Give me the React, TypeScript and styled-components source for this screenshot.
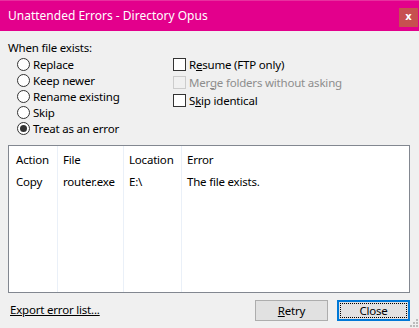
import React from 'react';
import styled, { createGlobalStyle } from 'styled-components';

const GlobalStyle = createGlobalStyle`
  html, body {
    margin: 0;
    padding: 0;
    background: #f0f0f0;
  }
  body {
    font-family: 'Noto Sans', 'Liberation Sans', sans-serif;
    font-size: 11.5px;
    letter-spacing: -0.2px;
    color: #000;
  }
`;

const radioOptions = ['Replace', 'Keep newer', 'Rename existing', 'Skip', 'Treat as an error'];

const checkOptions: { before: string; key: string; after: string; disabled?: boolean }[] = [
  { before: 'R', key: 'e', after: 'sume (FTP only)' },
  { before: 'Mer', key: 'g', after: 'e folders without asking', disabled: true },
  { before: 'S', key: 'k', after: 'ip identical' },
];

const columns = [
  { title: 'Action', width: 49 },
  { title: 'File', width: 66 },
  { title: 'Location', width: 58 },
  { title: 'Error', width: 0 },
];

const rows = [['Copy', 'router.exe', 'E:\\', 'The file exists.']];

export default function App() {
  return (
    <Window>
      <GlobalStyle />
      <TitleBar>
        <Title>Unattended Errors - Directory Opus</Title>
        <CloseX>x</CloseX>
      </TitleBar>
      <Body>
        <Options>
          <RadioGroup>
            <GroupLabel>When file exists:</GroupLabel>
            {radioOptions.map((o, i) => (
              <OptionRow key={o}>
                <Radio checked={i === radioOptions.length - 1} />
                <span>{o}</span>
              </OptionRow>
            ))}
          </RadioGroup>
          <CheckGroup>
            {checkOptions.map((c) => (
              <CheckRow key={c.before + c.key} disabled={c.disabled}>
                <CheckBox disabled={c.disabled} />
                <span>
                  {c.before}
                  <u>{c.key}</u>
                  {c.after}
                </span>
              </CheckRow>
            ))}
          </CheckGroup>
        </Options>
        <ErrorList>
          <ListRow>
            {columns.map((c) => (
              <Cell key={c.title} w={c.width}>
                {c.title}
              </Cell>
            ))}
          </ListRow>
          {rows.map((r, i) => (
            <ListRow key={i}>
              {r.map((v, j) => (
                <Cell key={j} w={columns[j].width}>
                  {v}
                </Cell>
              ))}
            </ListRow>
          ))}
          <Dividers>
            {columns.slice(0, 3).map((c) => (
              <Divider key={c.title} w={c.width} />
            ))}
          </Dividers>
        </ErrorList>
        <Footer>
          <ExportLink>Export error list...</ExportLink>
          <Buttons>
            <Button>
              <u>R</u>etry
            </Button>
            <Button primary>
              <FocusRing>Close</FocusRing>
            </Button>
          </Buttons>
        </Footer>
      </Body>
      <Grip>
        <svg width="8" height="8" viewBox="0 0 8 8">
          <rect x="6" y="0" width="2" height="2" fill="#bcbcbc" />
          <rect x="3" y="3" width="2" height="2" fill="#bcbcbc" />
          <rect x="6" y="3" width="2" height="2" fill="#bcbcbc" />
          <rect x="0" y="6" width="2" height="2" fill="#bcbcbc" />
          <rect x="3" y="6" width="2" height="2" fill="#bcbcbc" />
          <rect x="6" y="6" width="2" height="2" fill="#bcbcbc" />
        </svg>
      </Grip>
    </Window>
  );
}

const Window = styled.div`
  position: relative;
  width: 419px;
  height: 328px;
  display: flex;
  flex-direction: column;
  background: #f0f0f0;
  overflow: hidden;
`;

const TitleBar = styled.div`
  height: 31px;
  flex: none;
  display: flex;
  justify-content: space-between;
  background: #e3008c;
  border-top: 1px solid #e8309f;
  box-sizing: border-box;
  color: #fff;
`;

const Title = styled.div`
  padding-left: 8px;
  line-height: 30px;
  font-size: 12px;
  letter-spacing: 0;
`;

const CloseX = styled.div`
  width: 19px;
  height: 19px;
  margin: 7px 1px 0 0;
  background: #c75050;
  color: #fff;
  font-family: 'DejaVu Sans', sans-serif;
  font-weight: bold;
  font-size: 10px;
  letter-spacing: 0;
  line-height: 18px;
  text-align: center;
`;

const Body = styled.div`
  flex: 1;
  display: flex;
  flex-direction: column;
  padding: 0 9px 0 8px;
`;

const Options = styled.div`
  display: flex;
  padding-top: 9px;
  height: 105px;
  box-sizing: border-box;
`;

const RadioGroup = styled.div`
  width: 165px;
  display: flex;
  flex-direction: column;
`;

const GroupLabel = styled.div`
  height: 16px;
  line-height: 16px;
  margin-bottom: 1px;
`;

const OptionRow = styled.div`
  height: 16.25px;
  display: flex;
  align-items: center;
  gap: 3px;
  padding-left: 9px;
  white-space: nowrap;
`;

const Radio = styled.span<{ checked?: boolean }>`
  width: 13px;
  height: 13px;
  flex: none;
  box-sizing: border-box;
  border: 1px solid #333;
  border-radius: 50%;
  background: #fff;
  display: flex;
  align-items: center;
  justify-content: center;
  &::after {
    content: '';
    display: ${(p) => (p.checked ? 'block' : 'none')};
    width: 7px;
    height: 7px;
    border-radius: 50%;
    background: #333;
  }
`;

const CheckGroup = styled.div`
  display: flex;
  flex-direction: column;
  padding-top: 15px;
`;

const CheckRow = styled.div<{ disabled?: boolean }>`
  height: 18px;
  display: flex;
  align-items: center;
  gap: 3px;
  white-space: nowrap;
  color: ${(p) => (p.disabled ? '#8d8d8d' : '#000')};
`;

const CheckBox = styled.span<{ disabled?: boolean }>`
  width: 13px;
  height: 13px;
  flex: none;
  box-sizing: border-box;
  border: 1px solid ${(p) => (p.disabled ? '#cccccc' : '#333')};
  background: ${(p) => (p.disabled ? '#f0f0f0' : '#fff')};
`;

const ErrorList = styled.div`
  position: relative;
  height: 148px;
  margin-top: 9px;
  border: 1px solid #828790;
  box-sizing: border-box;
  background: #fff;
  padding-top: 2px;
`;

const ListRow = styled.div`
  display: flex;
  height: 22px;
  align-items: center;
`;

const Cell = styled.div<{ w: number }>`
  box-sizing: border-box;
  padding-left: 5px;
  white-space: nowrap;
  ${(p) => (p.w ? `width: ${p.w}px;` : 'flex: 1;')}
  &:first-child {
    padding-left: 7px;
  }
`;

const Dividers = styled.div`
  position: absolute;
  inset: 0;
  display: flex;
  pointer-events: none;
`;

const Divider = styled.div<{ w: number }>`
  width: ${(p) => p.w}px;
  border-right: 1px solid #eaf0f8;
  box-sizing: border-box;
`;

const Footer = styled.div`
  display: flex;
  justify-content: space-between;
  align-items: flex-start;
  padding-top: 7px;
`;

const ExportLink = styled.a`
  margin: 2px 0 0 2px;
  line-height: 16px;
  color: #000;
  text-decoration: underline;
  cursor: pointer;
`;

const Buttons = styled.div`
  display: flex;
  gap: 9px;
`;

const Button = styled.button<{ primary?: boolean }>`
  width: 73px;
  height: 21px;
  box-sizing: border-box;
  padding: 0;
  font: inherit;
  letter-spacing: inherit;
  color: #000;
  background: #e1e1e1;
  border: ${(p) => (p.primary ? '2px solid #0078d7' : '1px solid #adadad')};
  display: flex;
  align-items: stretch;
  justify-content: center;
  line-height: 19px;
`;

const FocusRing = styled.span`
  flex: 1;
  margin: 1px;
  border: 1px dotted #000;
  line-height: 13px;
  text-align: center;
`;

const Grip = styled.div`
  position: absolute;
  right: 1px;
  bottom: 1px;
  line-height: 0;
`;
